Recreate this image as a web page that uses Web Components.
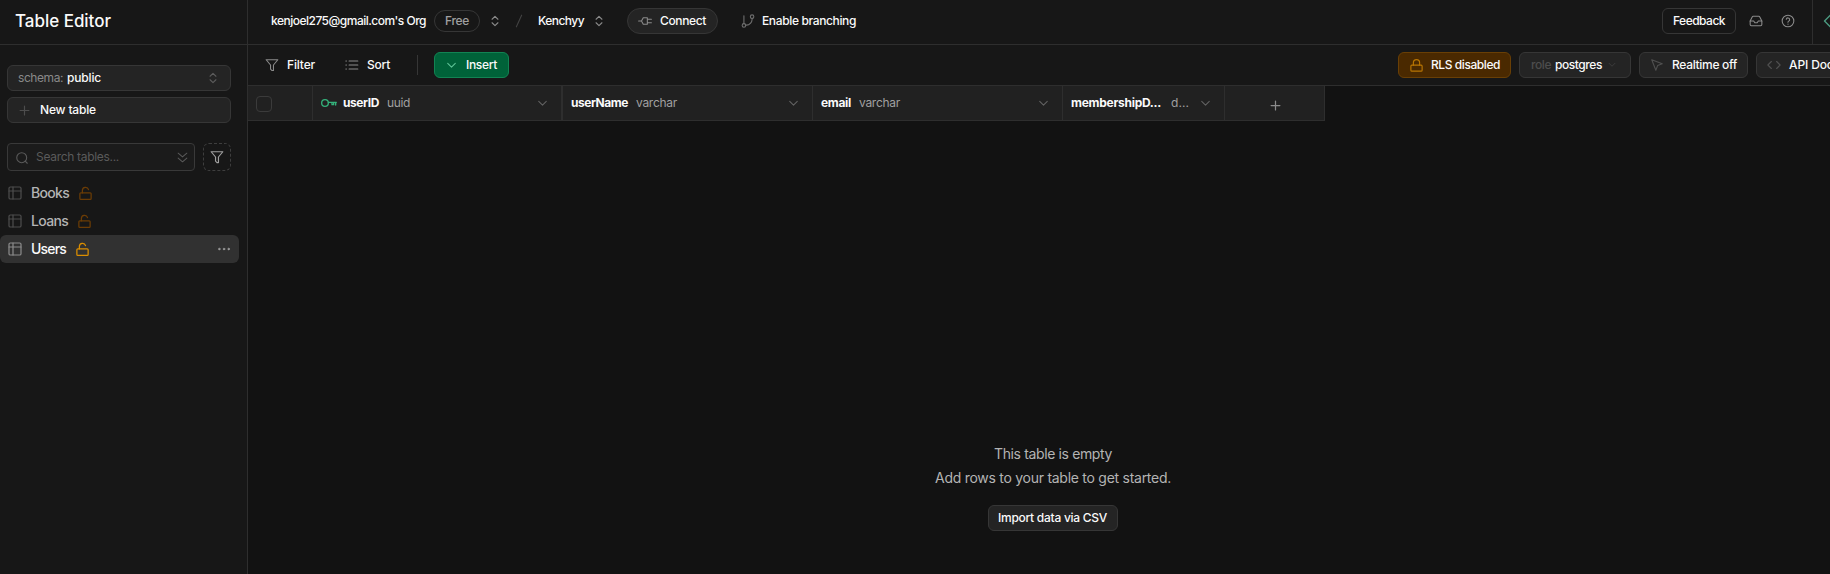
<!DOCTYPE html>
<html lang="en">
<head>
<meta charset="utf-8">
<title>Table Editor</title>
<style>
html,body{margin:0;height:100%;background:#121212;overflow:hidden}
body{font-family:Inter,"Liberation Sans",sans-serif;font-size:12px;color:#fafafa}
</style>
</head>
<body>
<table-editor></table-editor>
<script>
const define = (name, html, extra) => {
  const tpl = document.createElement('template');
  tpl.innerHTML = html;
  customElements.define(name, class extends HTMLElement {
    connectedCallback() {
      if (this.shadowRoot) return;
      this.attachShadow({mode: 'open'}).append(tpl.content.cloneNode(true));
      if (extra) extra.call(this, this.shadowRoot);
    }
  });
};

/* stroke icons on a 24-unit grid */
const icons = {
  updown: '<path d="m7 15 5 5 5-5M7 9l5-5 5 5"/>',
  plus: '<path d="M5 12h14M12 5v14"/>',
  search: '<circle cx="11.5" cy="11.5" r="8.5"/><path d="m21 21-3.5-3.5"/>',
  chevdowns: '<path d="m4 4 8 7 8-7M4 13l8 7 8-7"/>',
  funnel: '<path d="M2 3h20l-7.5 9v9.5h-2.5l-2.5-2.5V12z"/>',
  table: '<rect x="3" y="3" width="18" height="18" rx="2"/><path d="M3 9h18M9 3v18"/>',
  unlock: '<rect x="3" y="11" width="18" height="10.5" rx="1.5"/><path d="M7 11V7a5 5 0 0 1 9.8-1.2"/>',
  lock: '<rect x="3" y="11.5" width="18" height="9.5" rx="1.5"/><path d="M7 11.5V7.5a5 5 0 0 1 10 0v4"/>',
  dots: '<g fill="currentColor"><circle cx="4" cy="12" r="1.5"/><circle cx="12" cy="12" r="1.5"/><circle cx="20" cy="12" r="1.5"/></g>',
  slash: '<path d="M16.5 2 7.5 22"/>',
  plug: '<path d="M1 12h5M6 12l3-5.500h7v11H9zM16 9h7M16 15h7"/>',
  branch: '<circle cx="19" cy="4.500" r="3"/><circle cx="5" cy="19.500" r="3"/><path d="M5 3v13.500M19 7.500v2a9 9 0 0 1-2.500 6 10 10 0 0 1-8.500 3.500"/>',
  list: '<path d="M7 5h15M7 12h15M7 19h15M1.500 5h1M1.500 12h1M1.500 19h1"/>',
  chevron: '<path d="m5 8 7 7 7-7"/>',
  key: '<circle cx="6" cy="12" r="5"/><path d="M11 11h12M22 11v4M16.500 11v3.500h2.500V11"/>',
  cursor: '<path d="m3 3 18 7-8 3-3 8z"/>',
  code: '<path d="m16.500 18 6-6-6-6M7.500 6l-6 6 6 6"/>',
  inbox: '<path d="M22 12h-6l-2 3h-4l-2-3H2"/><path d="M5.500 5 2 12v6a2 2 0 0 0 2 2h16a2 2 0 0 0 2-2v-6l-3.500-7a2 2 0 0 0-1.700-1H7.200a2 2 0 0 0-1.700 1z"/>',
  help: '<circle cx="12" cy="12" r="10"/><path d="M9 9a3 3 0 0 1 5.900 1c0 2-3 2.500-3 4M12 17.200v.2"/>',
  diamond: '<path d="M12 2 2 12l10 10 10-10z"/>'
};
customElements.define('ui-icon', class extends HTMLElement {
  connectedCallback() {
    if (this.shadowRoot) return;
    const s = this.getAttribute('size') || 16, w = this.getAttribute('stroke') || 1.85;
    this.attachShadow({mode: 'open'}).innerHTML =
      `<style>:host{display:block;flex:none;width:${s}px;height:${s}px}svg{display:block}</style>
      <svg width="${s}" height="${s}" viewBox="0 0 24 24" fill="none" stroke="currentColor" stroke-width="${w}" stroke-linecap="round" stroke-linejoin="round">${icons[this.getAttribute('name')]}</svg>`;
  }
});

/* one line of text tracked to a given width */
define('fit-text', `<style>:host{display:block;flex:none;white-space:nowrap}span{display:inline-block}</style><span><slot></slot></span>`, function (root) {
  const w = +this.getAttribute('w'), span = root.querySelector('span');
  this.style.width = w + 'px';
  const fit = () => {
    span.style.letterSpacing = '0';
    const n = this.textContent.length;
    span.style.letterSpacing = ((w - span.getBoundingClientRect().width) / n).toFixed(3) + 'px';
  };
  requestAnimationFrame(fit);
  fit();
});

define('ui-button', `<style>
:host{display:flex;flex:none;box-sizing:border-box;align-items:center;height:26px;border:1px solid #363636;border-radius:6px;background:#242424;font-weight:500;color:#fafafa}
</style><slot></slot>`);

define('table-item', `<style>
:host{display:flex;align-items:center;box-sizing:border-box;height:28px;width:239px;padding-left:7px;border-radius:6px;color:#b4b4b4;font-size:14px;font-weight:500}
:host([active]){background:#313131;color:#fafafa}
.t{color:#4d4d4d}.l{color:#6b3c05;margin:0 0 0 9px}
:host([active]) .t{color:#8b8b8b}:host([active]) .l{color:#db8e00}
slot{display:block;margin:0 0 2px 8px}
.d{display:none;margin-left:auto;margin-right:8px;color:#a0a0a0}
:host([active]) .d{display:block}
</style><ui-icon class="t" name="table"></ui-icon><slot></slot><ui-icon class="l" name="unlock" stroke="2" size="15"></ui-icon><ui-icon class="d" name="dots" size="14" stroke="1"></ui-icon>`);

define('side-bar', `<style>
:host{display:flex;flex-direction:column;box-sizing:border-box;width:248px;border-right:1px solid #2e2e2e;background:#171717}
header{display:flex;align-items:center;height:44px;border-bottom:1px solid #2e2e2e;padding-left:15px;font-size:17px;box-sizing:content-box}
header fit-text{margin-top:-3px;font-weight:450}
.c{padding:20px 16px 0 7px;display:flex;flex-direction:column;gap:6px}
.c fit-text{margin-bottom:1px}
.g{color:#898989;font-weight:400}
.r{display:flex;gap:8px;margin-top:14px}
.s{display:flex;align-items:center;box-sizing:border-box;width:188px;height:28px;border:1px solid #393939;border-radius:4px;background:#1b1b1b;color:#5a5a5a;padding:0 5px 0 7px}
.b{display:grid;place-items:center;box-sizing:border-box;width:28px;height:28px;border:1px dashed #3e3e3e;border-radius:6px;color:#a0a0a0}
nav{margin-top:8px}
</style>
<header><fit-text w="96">Table Editor</fit-text></header>
<div class="c">
<ui-button><fit-text class="g" w="45" style="margin-left:10px">schema:</fit-text><fit-text w="34" style="margin-left:4px">public</fit-text><ui-icon name="updown" size="14" style="margin-left:auto;margin-right:10px;color:#5c5c5c"></ui-icon></ui-button>
<ui-button><ui-icon name="plus" size="15" style="margin-left:9px;color:#4d4d4d"></ui-icon><fit-text w="56" style="margin-left:8px;margin-bottom:2px">New table</fit-text></ui-button>
<div class="r"><div class="s"><ui-icon name="search" size="14" style="margin-top:1px"></ui-icon><fit-text w="83" style="margin-left:7px">Search tables...</fit-text><ui-icon name="chevdowns" size="13" style="margin-left:auto"></ui-icon></div>
<div class="b"><ui-icon name="funnel" size="14" stroke="2"></ui-icon></div></div>
</div>
<nav>
<table-item><fit-text w="38">Books</fit-text></table-item>
<table-item><fit-text w="37">Loans</fit-text></table-item>
<table-item active><fit-text w="35">Users</fit-text></table-item>
</nav>`);

define('top-bar', `<style>
:host{display:flex;align-items:center;box-sizing:border-box;height:45px;padding-bottom:3px;background:#171717;border-bottom:1px solid #2e2e2e;font-weight:500;overflow:hidden}
ui-icon{color:#8b8b8b}
.p{display:flex;align-items:center;box-sizing:border-box;height:22px;width:46px;padding-left:10px;border:1px solid #363636;border-radius:11px;color:#a0a0a0;margin-left:8px}
.e{display:flex;align-items:center;margin-left:auto;width:168px;flex:none}
.v{width:1px;height:44px;background:#2e2e2e;margin:3px 0 0 17px;flex:none}
</style>
<fit-text w="155" style="margin-left:23px">kenjoel275@gmail.com's Org</fit-text>
<div class="p"><fit-text w="24">Free</fit-text></div>
<ui-icon name="updown" size="14" style="margin-left:8px"></ui-icon>
<ui-icon name="slash" size="14" style="margin-left:10px;color:#434343"></ui-icon>
<fit-text w="46" style="margin-left:12px">Kenchyy</fit-text>
<ui-icon name="updown" size="14" style="margin-left:8px"></ui-icon>
<ui-button style="width:91px;border-radius:13px;margin-left:21px"><ui-icon name="plug" size="14" style="margin-left:10px"></ui-icon><fit-text w="46" style="margin-left:8px">Connect</fit-text></ui-button>
<ui-icon name="branch" size="14" style="margin-left:23px;color:#707070"></ui-icon>
<fit-text w="94" style="margin-left:7px">Enable branching</fit-text>
<div class="e"><ui-button style="width:74px;background:#171717"><fit-text w="52" style="margin-left:10px">Feedback</fit-text></ui-button>
<ui-icon name="inbox" size="14" style="margin-left:13px"></ui-icon>
<ui-icon name="help" size="14" style="margin-left:18px"></ui-icon>
<div class="v"></div>
<ui-icon name="diamond" size="18" style="margin-left:10px;color:#4c9a80"></ui-icon></div>`);

define('tool-bar', `<style>
:host{display:flex;align-items:center;box-sizing:border-box;height:41px;background:#171717;border-bottom:1px solid #2e2e2e;font-weight:500;overflow:hidden}
ui-icon{color:#8b8b8b}
fit-text{margin-bottom:2px}
.v{width:1px;height:20px;background:#363636;margin-left:27px}
.e{display:flex;gap:8px;margin-left:auto;width:432px;flex:none}
.e ui-icon{color:#505050}
</style>
<ui-icon name="funnel" size="14" style="margin-left:17px"></ui-icon><fit-text w="28" style="margin-left:8px">Filter</fit-text>
<ui-icon name="list" size="14" style="margin-left:30px"></ui-icon><fit-text w="23" style="margin-left:8px">Sort</fit-text>
<div class="v"></div>
<ui-button style="width:75px;margin-left:16px;background:#006239;border-color:#128353"><ui-icon name="chevron" size="13" style="margin-left:10px;color:#5fc598"></ui-icon><fit-text w="31" style="margin-left:8px">Insert</fit-text></ui-button>
<div class="e">
<ui-button style="width:113px;background:#4a2900;border-color:#693f05"><ui-icon name="lock" size="15" style="margin-left:10px;color:#b87503"></ui-icon><fit-text w="69" style="margin-left:7px">RLS disabled</fit-text></ui-button>
<ui-button style="width:112px"><fit-text w="20" style="margin-left:11px;color:#4d4d4d">role</fit-text><fit-text w="47" style="margin-left:4px">postgres</fit-text><ui-icon name="chevron" size="10" style="margin-left:5px;color:#434343"></ui-icon></ui-button>
<ui-button style="width:109px"><ui-icon name="cursor" size="14" style="margin-left:10px"></ui-icon><fit-text w="65" style="margin-left:8px">Realtime off</fit-text></ui-button>
<ui-button style="width:96px"><ui-icon name="code" size="14" style="margin-left:10px"></ui-icon><fit-text w="51" style="margin-left:8px">API Docs</fit-text></ui-button>
</div>`);

define('column-head', `<style>
:host{display:flex;flex:none;align-items:center;box-sizing:border-box;height:35px;border-right:1px solid #2e2e2e;border-bottom:1px solid #2e2e2e;background:#212121;padding-left:8px}
::slotted([slot=type]){color:#a0a0a0;margin:0 0 1px 8px;font-weight:400}
::slotted([slot=name]){font-weight:700;margin-bottom:1px}
.c{margin-left:auto;margin-right:12px;color:#636363}
</style><slot></slot><slot name="name"></slot><slot name="type"></slot><ui-icon class="c" name="chevron" size="13"></ui-icon>`);

define('data-grid', `<style>
:host{display:flex;flex-direction:column;flex:1;background:#121212}
.h{display:flex}
.a,.z{box-sizing:border-box;height:35px;border-right:1px solid #2e2e2e;border-bottom:1px solid #2e2e2e;background:#212121;display:flex;align-items:center}
.a{width:65px;padding-left:8px;padding-top:1px}.z{width:100px;justify-content:center;padding-top:4px;padding-left:1px;color:#8b8b8b}
i{box-sizing:border-box;width:16px;height:16px;border:1px solid #3b3b3b;border-radius:4px}
.m{display:flex;flex-direction:column;align-items:center;width:1610px;color:#b4b4b4;font-size:14px;margin-top:321px}
.m fit-text{line-height:24px}
</style>
<div class="h"><div class="a"><i></i></div>
<column-head style="width:250px;border-right-width:2px"><ui-icon name="key" size="16" stroke="2" style="color:#34b27b"></ui-icon><fit-text slot="name" w="36" style="margin-left:6px">userID</fit-text><fit-text slot="type" w="23">uuid</fit-text></column-head>
<column-head style="width:250px"><fit-text slot="name" w="57">userName</fit-text><fit-text slot="type" w="41">varchar</fit-text></column-head>
<column-head style="width:250px"><fit-text slot="name" w="30">email</fit-text><fit-text slot="type" w="41">varchar</fit-text></column-head>
<column-head style="width:162px"><fit-text slot="name" w="90">membershipD...</fit-text><fit-text slot="type" w="18" style="margin-left:10px">d...</fit-text></column-head>
<div class="z"><ui-icon name="plus" size="15" stroke="2"></ui-icon></div></div>
<div class="m"><fit-text w="118">This table is empty</fit-text><fit-text w="236">Add rows to your table to get started.</fit-text>
<ui-button style="width:130px;margin-top:15px;font-size:12px"><fit-text w="109" style="margin-left:9px">Import data via CSV</fit-text></ui-button></div>`);

define('table-editor', `<style>
:host{display:flex;height:574px;width:1830px;overflow:hidden}
side-bar{flex:none}
main{display:flex;flex-direction:column;flex:1;min-width:0}
top-bar,tool-bar{flex:none}
</style><side-bar></side-bar><main><top-bar></top-bar><tool-bar></tool-bar><data-grid></data-grid></main>`);
</script>
</body>
</html>
